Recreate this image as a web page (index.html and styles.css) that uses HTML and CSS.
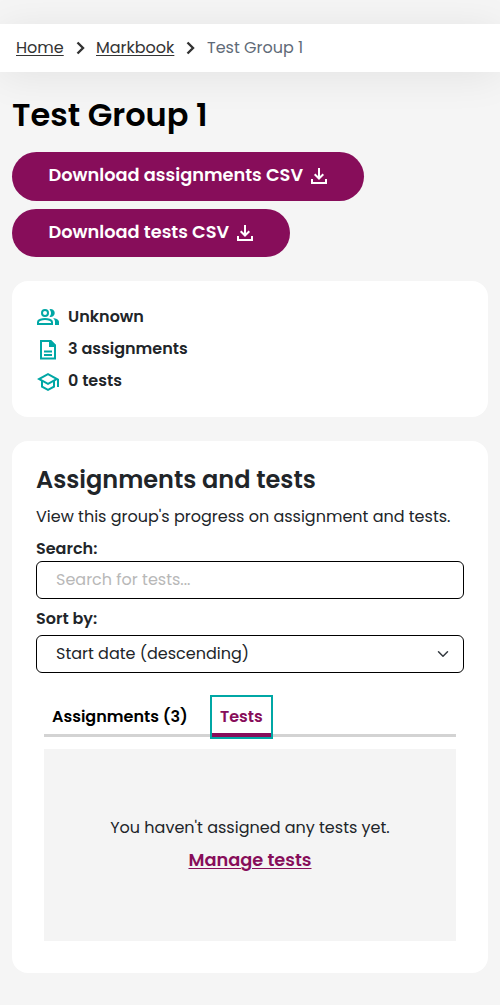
FILE: index.html
```
<!DOCTYPE html>
<html lang="en">
<head>
<meta charset="utf-8">
<title>Test Group 1</title>
<link rel="stylesheet" href="styles.css">
</head>
<body>
<nav class="breadcrumb" aria-label="Breadcrumb">
  <a class="crumb-home" href="#">Home</a>
  <svg class="crumb-arrow" viewBox="0 0 10 14"><path d="M1.500 1.500 7 7l-5.500 5.500"/></svg>
  <a class="crumb-markbook" href="#">Markbook</a>
  <svg class="crumb-arrow" viewBox="0 0 10 14"><path d="M1.500 1.500 7 7l-5.500 5.500"/></svg>
  <span class="crumb-current">Test Group 1</span>
</nav>
<main>
  <h1>Test Group 1</h1>
  <div class="actions">
    <button class="download"><span class="download-assignments">Download assignments CSV</span><svg class="download-icon" viewBox="0 0 16 16"><path d="M1 11v4h14v-4M8 0v10M3.700 6.200 8 10.500l4.300-4.300"/></svg></button>
    <button class="download"><span class="download-tests">Download tests CSV</span><svg class="download-icon" viewBox="0 0 16 16"><path d="M1 11v4h14v-4M8 0v10M3.700 6.200 8 10.500l4.300-4.300"/></svg></button>
  </div>
  <section class="card summary">
    <div class="stat"><svg viewBox="0 0 24 24"><g class="stroke"><circle cx="9" cy="8" r="3"/><path d="M2 19v-2c0-2 4-3 7-3s7 1 7 3v2Z"/></g><path d="M13.500 4.200A4 4 0 1 1 13.500 11.800 6 6 0 0 0 13.500 4.200ZM17 13.100c3 .5 6 1.700 6 3.900v3h-4v-3c0-1.600-.8-2.900-2-3.900Z"/></svg><span>Unknown</span></div>
    <div class="stat"><svg viewBox="0 0 24 24"><path class="stroke" d="M5 4h9.500l4.500 4.500V21.500H5ZM8 14.500h8M8 18h8"/><path d="M13 3h2l5 5v2h-7Z"/></svg><span>3 assignments</span></div>
    <div class="stat"><svg class="cap" viewBox="0 0 24 24"><path d="M12 3 1 9l4 2.180v6L12 21l7-3.820v-6l2-1.090V17h2V9L12 3zm6.820 6L12 12.720 5.180 9 12 5.280 18.820 9zM17 15.990l-5 2.730-5-2.730v-3.720L12 15l5-2.730v3.720z"/></svg><span>0 tests</span></div>
  </section>
  <section class="card progress">
    <h2>Assignments and tests</h2>
    <p class="intro">View this group's progress on assignment and tests.</p>
    <label class="search-label" for="search">Search:</label>
    <input class="field" id="search" type="text" placeholder="Search for tests...">
    <label class="sort-label" for="sort">Sort by:</label>
    <div class="field select" id="sort"><span>Start date (descending)</span><svg viewBox="0 0 16 16"><path d="m2 5 6 6 6-6"/></svg></div>
    <div class="tabs"><a class="tab tab-assignments">Assignments (3)</a><a class="tab tab-tests">Tests</a></div>
    <div class="empty">
      <p>You haven't assigned any tests yet.</p>
      <a href="#">Manage tests</a>
    </div>
  </section>
</main>
</body>
</html>
```
FILE: styles.css
```
* { box-sizing: border-box; }
body { margin: 0; background: #f5f5f5; color: #212529; font: 16px/24px Poppins, Inter, "Open Sans", sans-serif; overflow-x: hidden; }
h1, h2, p { margin: 0; }
.breadcrumb { display: flex; align-items: center; height: 48px; margin-top: 24px; padding: 0 16px; background: #fff; box-shadow: 0 4px 40px rgba(0, 0, 0, .08); white-space: nowrap; }
.breadcrumb a { color: #333; text-decoration: underline; text-underline-offset: 2px; text-decoration-thickness: 1px; }
.crumb-home { width: 48px; }
.crumb-markbook { width: 78px; }
.crumb-arrow { width: 10px; height: 14px; margin: 0 10px 0 12px; fill: none; stroke: #333; stroke-width: 2.400; flex: none; }
.crumb-current { color: #5f6b78; margin-left: 1px; }
main { padding: 24px 12px 32px; }
h1 { color: #000; font-size: 32px; line-height: 38px; font-weight: 600; white-space: nowrap; }
.actions { display: flex; flex-direction: column; align-items: flex-start; gap: 8px; margin-top: 18px; }
.download { display: flex; align-items: center; height: 48.500px; padding: 0 36.500px; border: 0; border-radius: 25px; background: #870d5a; color: #fff; font: 600 17.750px/27px Poppins, Inter, sans-serif; white-space: nowrap; }
.download span { padding-bottom: 3px; text-align: left; }
.download-assignments { width: 255px; }
.download-tests { width: 181px; }
.download-icon { width: 16px; height: 16px; margin-left: 7.500px; fill: none; stroke: #fff; stroke-width: 2; }
.card { background: #fff; border-radius: 16px; margin-top: 24px; }
.summary { display: flex; flex-direction: column; gap: 8px; height: 136px; padding: 24px; font-weight: 600; }
.stat { display: flex; align-items: center; gap: 8px; height: 24px; }
.stat svg { width: 24px; height: 24px; fill: #00a7a5; }
.stat .cap { margin-top: 2px; }
.stat .stroke { fill: none; stroke: #00a7a5; stroke-width: 2; }
.progress { height: 532px; padding: 24px; }
h2 { font-size: 24px; line-height: 29px; font-weight: 600; white-space: nowrap; }
.intro { margin-top: 11px; white-space: nowrap; }
label { display: block; font-weight: 600; }
.search-label { margin-top: 8px; }
.sort-label { margin-top: 8px; }
.field { display: flex; align-items: center; width: 100%; height: 38px; padding: 0 19px; border: 1px solid #000; border-radius: 6px; background: #fff; font: inherit; color: #212529; }
input.field { padding-bottom: 2px; }
.field::placeholder { color: #b8b8b8; opacity: 1; }
.select { justify-content: space-between; padding-right: 14px; margin-top: 4px; }
.select svg { width: 12px; height: 12px; fill: none; stroke: #343a40; stroke-width: 2; stroke-linecap: round; stroke-linejoin: round; }
.tabs { display: flex; height: 42px; margin: 22px 8px 0; border-bottom: 3px solid #d3d3d3; color: #000; font-weight: 600; white-space: nowrap; }
.tab { display: block; }
.tab-assignments { width: 166px; padding: 10px 8px 0; }
.tab-tests { width: 63px; height: 44px; padding: 8px 8px 0; color: #870d5a; border: 2px solid #00a7a5; box-shadow: inset 0 -4px #870d5a; }
.empty { display: flex; flex-direction: column; align-items: center; height: 192px; margin: 12px 8px 0; padding-top: 67px; background: #f4f4f4; white-space: nowrap; }
.empty a { margin-top: 6px; color: #870d5a; font-size: 17.750px; line-height: 27px; font-weight: 600; text-underline-offset: 2px; text-decoration-thickness: 1px; }
```
